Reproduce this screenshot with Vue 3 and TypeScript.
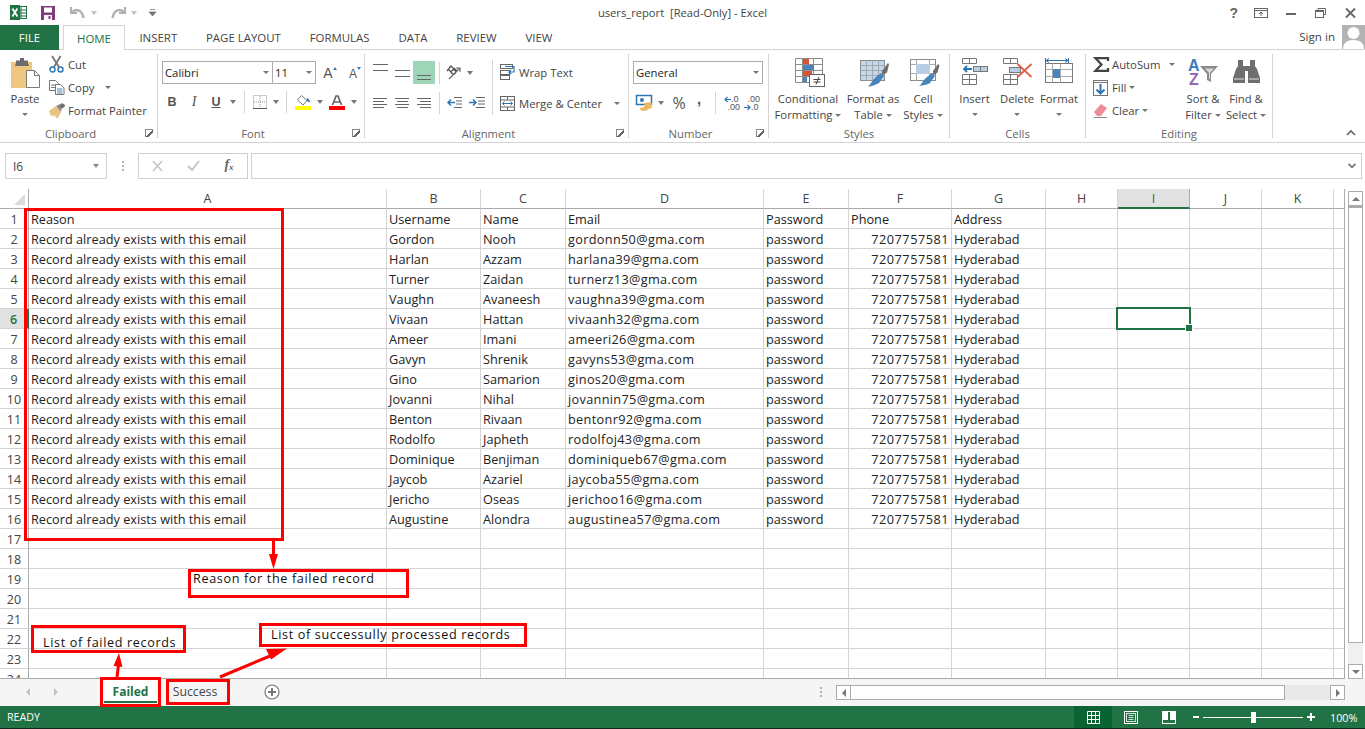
<script setup lang="ts">
const tabs: string[] = ['INSERT', 'PAGE LAYOUT', 'FORMULAS', 'DATA', 'REVIEW', 'VIEW']
const columns: string[] = ['A', 'B', 'C', 'D', 'E', 'F', 'G', 'H', 'I', 'J', 'K', '']
const people: string[][] = [
  ['Gordon', 'Nooh', 'gordonn50@gma.com'],
  ['Harlan', 'Azzam', 'harlana39@gma.com'],
  ['Turner', 'Zaidan', 'turnerz13@gma.com'],
  ['Vaughn', 'Avaneesh', 'vaughna39@gma.com'],
  ['Vivaan', 'Hattan', 'vivaanh32@gma.com'],
  ['Ameer', 'Imani', 'ameeri26@gma.com'],
  ['Gavyn', 'Shrenik', 'gavyns53@gma.com'],
  ['Gino', 'Samarion', 'ginos20@gma.com'],
  ['Jovanni', 'Nihal', 'jovannin75@gma.com'],
  ['Benton', 'Rivaan', 'bentonr92@gma.com'],
  ['Rodolfo', 'Japheth', 'rodolfoj43@gma.com'],
  ['Dominique', 'Benjiman', 'dominiqueb67@gma.com'],
  ['Jaycob', 'Azariel', 'jaycoba55@gma.com'],
  ['Jericho', 'Oseas', 'jerichoo16@gma.com'],
  ['Augustine', 'Alondra', 'augustinea57@gma.com'],
]
const blank = (): string[] => Array(12).fill('')
const rows: string[][] = [
  ['Reason', 'Username', 'Name', 'Email', 'Password', 'Phone', 'Address', '', '', '', '', ''],
  ...people.map((p) => ['Record already exists with this email', p[0], p[1], p[2], 'password', '7207757581', 'Hyderabad', '', '', '', '', '']),
  ...Array.from({ length: 8 }, blank),
]
</script>

<template>
  <div class="app">
    <header class="titlebar">
      <div class="qat">
        <svg class="i-xl" width="17" height="15" viewBox="0 0 17 15"><rect x="6" y="1.500" width="10.500" height="12" fill="#fff" stroke="#217346"/><path d="M6 5h10M6 8h10M6 11h10M11 2v12" stroke="#217346" fill="none"/><rect width="10" height="15" fill="#217346"/><path d="M2.400 3.500 7.400 11.500M7.400 3.500 2.400 11.500" stroke="#fff" stroke-width="1.800" fill="none"/></svg>
        <svg class="i-save" width="14" height="14" viewBox="0 0 14 14"><path d="M0 0h14v14H0z" fill="#80397b"/><rect x="3" y="1.500" width="8" height="5" fill="#fff"/><rect x="3" y="9" width="8" height="5" fill="#fff"/><rect x="7.500" y="10" width="2" height="3" fill="#80397b"/></svg>
        <svg class="i-undo" width="15" height="13" viewBox="0 0 15 13"><path d="M1 1v6h6" fill="none" stroke="#b1b1b1" stroke-width="2.200"/><path d="M2 6.500C5 2.500 12 3 13.500 12" fill="none" stroke="#b1b1b1" stroke-width="2.400"/></svg>
        <i class="caret qc1 pale"></i>
        <svg class="i-redo" width="15" height="13" viewBox="0 0 15 13"><path d="M14 1v6H8" fill="none" stroke="#b1b1b1" stroke-width="2.200"/><path d="M13 6.500C10 2.500 3 3 1.500 12" fill="none" stroke="#b1b1b1" stroke-width="2.400"/></svg>
        <i class="caret qc2 pale"></i>
        <svg class="i-cust" width="7" height="7" viewBox="0 0 7 7"><path d="M1 .5h5M0 3h7L3.500 7z" stroke="#777" stroke-width=".8" fill="#777"/></svg>
      </div>
      <div class="doc-title">users_report&nbsp; [Read-Only] - Excel</div>
      <div class="winctl">
        <span class="help">?</span>
        <svg width="14" height="10" viewBox="0 0 14 10"><rect x=".5" y=".5" width="13" height="9" fill="none" stroke="#666"/><path d="M.5 2.500h13M7 8V4M5 6l2-2 2 2" stroke="#666" fill="none"/></svg>
        <svg class="min" width="10" height="2" viewBox="0 0 10 2"><rect width="10" height="2" fill="#666"/></svg>
        <svg class="res" width="11" height="10" viewBox="0 0 11 10"><path d="M3 2.500V.5h7.500v6H8.500" fill="none" stroke="#666"/><rect x=".5" y="2.500" width="8" height="7" fill="none" stroke="#666"/><path d="M0 3.500h9" stroke="#666"/></svg>
        <svg class="cls" width="11" height="10" viewBox="0 0 11 10"><path d="M1 .5l9 9M10 .5l-9 9" stroke="#666" stroke-width="1.800" fill="none"/></svg>
      </div>
    </header>

    <nav class="tabbar">
      <div class="file">FILE</div>
      <div class="tab home">HOME</div>
      <div v-for="t in tabs" :key="t" class="tab">{{ t }}</div>
      <div class="signin">Sign in</div>
      <svg class="avatar" width="23" height="24" viewBox="0 0 23 24"><rect width="23" height="24" fill="#b3b3b3"/><circle cx="11.500" cy="8" r="6" fill="#fff"/><path d="M1 24c0-6 4-9 10.500-9S22 18 22 24z" fill="#fff"/></svg>
    </nav>

    <section class="ribbon">
      <div class="group g-clip">
        <div class="body">
          <div class="big w-paste">
            <svg class="big-ic" width="30" height="31" viewBox="0 0 30 31"><rect y="4" width="21" height="26" fill="#edc87e"/><path d="M5 5V2.500h4V0h4v2.500h4V5l1 3H4z" fill="#6d6d6d"/><path d="M15.500 12.500h8l5 5v12h-13z" fill="#fff" stroke="#7a7a7a"/><path d="M23.500 12.500v5h5" fill="none" stroke="#7a7a7a"/></svg>
            <span>Paste</span><i class="caret line-caret"></i>
          </div>
          <div class="stack">
            <div class="small"><span class="slot">
              <svg width="15" height="17" viewBox="0 0 15 17"><path d="M3 0l7 11M11.500 0L5 11" stroke="#777" stroke-width="1.800" fill="none"/><circle cx="3.500" cy="13.500" r="2.500" fill="none" stroke="#2f74b5" stroke-width="1.400"/><circle cx="11.500" cy="13.500" r="2.500" fill="none" stroke="#2f74b5" stroke-width="1.400"/></svg>
            </span>Cut</div>
            <div class="small"><span class="slot">
              <svg width="16" height="15" viewBox="0 0 16 15"><path d="M.5.500h6l3 3v7h-9z" fill="#fff" stroke="#777"/><path d="M2 5h5M2 7.500h5" stroke="#777"/><path d="M6.500 4.500h5l3.500 3.500v6.500H6.500z" fill="#fff" stroke="#777"/><path d="M8 9h5.500M8 11h5.500M8 13h5.500" stroke="#4a83bd"/></svg>
            </span>Copy<i class="caret copy-caret"></i></div>
            <div class="small"><span class="slot">
              <svg width="17" height="15" viewBox="0 0 17 15"><path d="M0 8l7-5 5 6-3 6H7l-1-3-1 2-1-2-2 1z" fill="#e8c27f"/><path d="M7 3l4-2 2 3-1 5z" fill="#8b8b8b"/><path d="M10 3l3-3 3.500 2.500-3 3z" fill="#6e6e6e"/></svg>
            </span>Format Painter</div>
          </div>
        </div>
        <div class="label-row"><span class="label">Clipboard</span><i class="launch"></i></div>
      </div>

      <div class="group g-font">
        <div class="body col">
          <div class="font-row1">
            <div class="field name">Calibri<i class="caret"></i></div>
            <div class="field size">11<i class="caret"></i></div>
            <span class="grow"><b class="a1">A</b><i class="tri up"></i></span>
            <span class="shrink"><b class="a2">A</b><i class="tri down"></i></span>
          </div>
          <div class="font-row2">
            <b class="fmt">B</b><i class="fmt it">I</i><u class="fmt ul">U</u><i class="caret"></i><i class="sep"></i>
            <svg width="14" height="14" viewBox="0 0 14 14"><rect x=".5" y=".5" width="13" height="13" fill="none" stroke="#999" stroke-dasharray="1 1"/><path d="M7 1v12M1 7h12" stroke="#999" stroke-dasharray="1 1"/><path d="M0 13.500h14" stroke="#555"/></svg>
            <i class="caret"></i><i class="sep"></i>
            <svg width="16" height="15" viewBox="0 0 16 15"><path d="M6.500.5l5.500 5-4 4.500-5.500-5z" fill="#fff" stroke="#777"/><path d="M12 3c2 1 3 2.500 3 4.500-1.500-.5-2.500-1-3.500-2z" fill="#3c7cbd"/><rect y="11" width="16" height="4" fill="#ffff00"/></svg>
            <i class="caret"></i>
            <svg width="16" height="15" viewBox="0 0 16 15"><path d="M3.500 10L7 1h2l3.500 9M5 7h6" fill="none" stroke="#666" stroke-width="1.700"/><rect y="11" width="16" height="4" fill="#f00"/></svg>
            <i class="caret"></i>
          </div>
        </div>
        <div class="label-row"><span class="label">Font</span><i class="launch"></i></div>
      </div>

      <div class="group g-align">
        <div class="body align-body">
          <div class="align-left">
            <div class="align-row">
              <span class="lines top"><i></i><i></i></span>
              <span class="lines mid"><i></i><i></i></span>
              <span class="lines bottom on"><i></i><i></i></span>
              <i class="sep"></i>
              <svg width="18" height="17" viewBox="0 0 18 17"><path d="M2 7l4-5 3 3M3.500 5.500l3 3" fill="none" stroke="#555" stroke-width="1.300"/><path d="M7 9.500a2 2 0 1 1 3-3 2 2 0 0 1-3 3zM9 4l3 3" fill="none" stroke="#555" stroke-width="1.200"/><path d="M4 15 14.500 4.500M11 4h4v4" fill="none" stroke="#666" stroke-width="1.100"/></svg>
              <i class="caret"></i>
            </div>
            <div class="align-row r2">
              <span class="lines bars al"><i></i><i></i><i></i><i></i></span>
              <span class="lines bars ac"><i></i><i></i><i></i><i></i></span>
              <span class="lines bars ar"><i></i><i></i><i></i><i></i></span>
              <i class="sep"></i>
              <svg width="15" height="12" viewBox="0 0 15 12"><path d="M7 .5h8M9 4h6M9 7h6M7 10.500h8" stroke="#666" fill="none"/><path d="M8 5.500H1M4 2.500l-3 3 3 3" stroke="#2e75b6" stroke-width="1.500" fill="none"/></svg>
              <svg width="16" height="12" viewBox="0 0 16 12"><path d="M7 .5h9M9 4h7M9 7h7M7 10.500h9" stroke="#666" fill="none"/><path d="M0 5.500h7M4 2.500l3 3-3 3" stroke="#2e75b6" stroke-width="1.500" fill="none"/></svg>
            </div>
          </div>
          <i class="tall-sep"></i>
          <div class="align-right">
            <div class="small wrap"><span class="slot">
              <svg width="15" height="16" viewBox="0 0 15 16"><rect x=".5" y=".5" width="12" height="4" fill="#fff" stroke="#666"/><rect x=".5" y="6.500" width="9" height="4" fill="#fff" stroke="#666"/><rect x=".5" y="11.500" width="9" height="4" fill="#fff" stroke="#666"/><path d="M5 2.500h9v5.500H9M11 6l-2 2 2 2" fill="none" stroke="#2e75b6" stroke-width="1.200"/></svg>
            </span>Wrap Text</div>
            <div class="small merge"><span class="slot">
              <svg width="15" height="15" viewBox="0 0 15 15"><rect x=".5" y=".5" width="14" height="14" fill="#fff" stroke="#666"/><path d="M1 4h13M1 11h13M7.500 1v3M7.500 11v3" stroke="#666"/><path d="M2.500 7.500h10M4.500 5.500l-2 2 2 2M10.500 5.500l2 2-2 2" fill="none" stroke="#2e75b6"/></svg>
            </span>Merge &amp; Center<i class="caret merge-caret"></i></div>
          </div>
        </div>
        <div class="label-row"><span class="label">Alignment</span><i class="launch"></i></div>
      </div>

      <div class="group g-num">
        <div class="body col">
          <div class="field general">General<i class="caret"></i></div>
          <div class="num-row">
            <svg width="17" height="16" viewBox="0 0 17 16"><rect x=".5" y=".5" width="15" height="9" fill="#fff" stroke="#2e75b6" stroke-width="1.500"/><circle cx="6" cy="5" r="2" fill="#2e75b6"/><ellipse cx="12" cy="9" rx="4" ry="1.800" fill="#edb85c"/><ellipse cx="12" cy="12" rx="4" ry="1.800" fill="#edb85c"/><ellipse cx="8" cy="14" rx="4" ry="1.800" fill="#edb85c"/></svg>
            <i class="caret"></i>
            <span class="pct">%</span>
            <span class="comma">,</span>
            <i class="sep"></i>
            <span class="dec"><svg width="7" height="7" viewBox="0 0 7 7"><path d="M7 3.500H1M3.500 1 1 3.500 3.500 6" fill="none" stroke="#2e75b6" stroke-width="1.200"/></svg><em class="d1">.0</em><em class="d2">.00</em></span>
            <span class="dec"><em class="d3">.00</em><svg width="7" height="7" viewBox="0 0 7 7"><path d="M0 3.500h6M3.500 1 6 3.500 3.500 6" fill="none" stroke="#2e75b6" stroke-width="1.200"/></svg><em class="d4">.0</em></span>
          </div>
        </div>
        <div class="label-row"><span class="label">Number</span><i class="launch"></i></div>
      </div>

      <div class="group g-styles">
        <div class="body">
          <div class="big w-cond">
            <svg class="big-ic" width="30" height="31" viewBox="0 0 30 31"><path d="M.5.500h27v24H.5zM.5 6.500h27M.5 12.500h27M.5 18.500h27M7.500.500v24M18.500.500v24" fill="#fff" stroke="#8c8c8c"/><rect x="8" y="1" width="6" height="5" fill="#d65532"/><rect x="8" y="7" width="11" height="5" fill="#4a83bd"/><rect x="8" y="13" width="9" height="5" fill="#d65532"/><rect x="8" y="19" width="4" height="5" fill="#4a83bd"/><rect x="14.500" y="16.500" width="15" height="12" fill="#fff" stroke="#666"/><path d="M18.500 21.500h7M18.500 24h7M24 19l-3 7.500" stroke="#444" fill="none"/></svg>
            <span>Conditional</span><span>Formatting<i class="caret inline"></i></span>
          </div>
          <div class="big w-fmt">
            <svg class="big-ic" width="30" height="31" viewBox="0 0 30 31"><g transform="translate(0 2)"><rect x=".5" y=".5" width="24" height="20" fill="#c5d7ea" stroke="#8c8c8c"/><path d="M.5 5.500h24M.5 10.500h24M.5 15.500h24M6.500.500v20M12.500.500v20M18.500.500v20" stroke="#a0a8b0" fill="none"/><path d="M22 11l6-8 1 1.500-2 8-5 3z" fill="#6e6e6e"/><path d="M21 13l3 3-5 7c-3 2-8 3-11 4 3-3 4-7 8-10z" fill="#4a83bd"/></g></svg>
            <span>Format as</span><span>Table<i class="caret inline"></i></span>
          </div>
          <div class="big w-cs">
            <svg class="big-ic" width="30" height="31" viewBox="0 0 30 31"><g transform="translate(0 1)"><rect x=".5" y=".5" width="25" height="21" fill="#fff" stroke="#8c8c8c"/><path d="M.5 5.500h25M.5 14.500h25M6.500.500v21M19.500.500v21" stroke="#a9a9a9" fill="none"/><rect x="6" y="5" width="14" height="10" fill="#b9cde5"/><path d="M23 12l5-7 1.500 1.500-2 7-4 3z" fill="#6e6e6e"/><path d="M22 14l3 3-5 7c-3 2-7 2-11 3 3-2 4-6 8-9z" fill="#4a83bd"/></g></svg>
            <span>Cell</span><span>Styles<i class="caret inline"></i></span>
          </div>
        </div>
        <div class="label-row single"><span class="label">Styles</span></div>
      </div>

      <div class="group g-cells">
        <div class="body">
          <div class="big w-ins">
            <svg class="big-ic" width="27" height="31" viewBox="0 0 27 31"><path d="M1.500.500h14v5h-14zM8.500.500v5M1.500 16.500h14v10h-14zM1.500 21.500h14M8.500 16.500v10" fill="#fff" stroke="#777"/><rect x="12.500" y="8.500" width="14" height="5" fill="#b9cde5" stroke="#777"/><path d="M19.500 8.500v5" stroke="#777"/><path d="M11 11H3M6 8 3 11l3 3" stroke="#2e75b6" stroke-width="1.800" fill="none"/></svg>
            <span>Insert</span><i class="caret line-caret"></i>
          </div>
          <div class="big w-del">
            <svg class="big-ic" width="31" height="31" viewBox="0 0 31 31"><path d="M1.500.500h14v5h-14zM8.500.500v5M1.500 16.500h14v10h-14zM1.500 21.500h14M8.500 16.500v10" fill="#fff" stroke="#777"/><rect x="7.500" y="9.500" width="11" height="5" fill="#b9cde5" stroke="#777"/><path d="M15.500 6l14 13M29.500 6l-14 13" stroke="#e0654a" stroke-width="2" fill="none"/></svg>
            <span>Delete</span><i class="caret line-caret"></i>
          </div>
          <div class="big w-form">
            <svg class="big-ic" width="30" height="31" viewBox="0 0 30 31"><path d="M.5 0v5M23.500 0v5" stroke="#2e75b6"/><path d="M1 2.500h22M4 .5l-3 2 3 2M20 .5l3 2-3 2" stroke="#2e75b6" fill="none"/><rect x=".5" y="5.500" width="27" height="19" fill="#fff" stroke="#777"/><path d="M.5 11.500h27M.5 18.500h27M7.500 5.500v19M15.500 5.500v19" stroke="#aaa" fill="none"/><rect x="8" y="11" width="7" height="9" fill="#4a83bd"/></svg>
            <span>Format</span><i class="caret line-caret"></i>
          </div>
        </div>
        <div class="label-row single"><span class="label">Cells</span></div>
      </div>

      <div class="group g-edit">
        <div class="body">
          <div class="stack edit-stack">
            <div class="small"><span class="slot">
              <svg width="16" height="15" viewBox="0 0 16 15"><path d="M15 4V1.200H2.500l6 6.300-6 6.300H15V11" fill="none" stroke="#444" stroke-width="2.300"/></svg>
            </span>AutoSum<i class="caret sum-caret"></i></div>
            <div class="small"><span class="slot">
              <svg width="15" height="16" viewBox="0 0 15 16"><rect x=".5" y=".5" width="14" height="15" fill="#fff" stroke="#777"/><path d="M.5 2.500h14" stroke="#777"/><path d="M7.500 4v9M3.500 9.500l4 4 4-4" fill="none" stroke="#2e75b6" stroke-width="2"/></svg>
            </span>Fill<i class="caret inline"></i></div>
            <div class="small"><span class="slot">
              <svg width="15" height="15" viewBox="0 0 15 15"><path d="M8 1l6 4-6 8H4L1 9z" fill="#ee8c9c"/><path d="M1 14.500h13" stroke="#888"/></svg>
            </span>Clear<i class="caret inline"></i></div>
          </div>
          <div class="big w-sort">
            <svg class="big-ic" width="30" height="31" viewBox="0 0 30 31">
              <text x="0" y="13" class="az a">A</text>
              <text x="1" y="27" class="az z">Z</text>
              <g transform="translate(12 8)"><path d="M0 0h18l-7 8v8l-4-2V8z" fill="#8a8a8a"/><path d="M5 2.500h9L10 7v6l-1-.5V7z" fill="#d8d8d8"/></g>
            </svg>
            <span>Sort &amp;</span><span>Filter<i class="caret inline"></i></span>
          </div>
          <div class="big w-find">
            <svg class="big-ic" width="27" height="31" viewBox="0 0 27 31"><g transform="translate(0 2)"><path d="M5 0h5v6h7V0h5v6l2 3 3 9v5H15V11h-3v12H0v-5l3-9 2-3z" fill="#6e6e6e"/><path d="M1 19h10M16 19h10" stroke="#fff" stroke-width=".8"/></g></svg>
            <span>Find &amp;</span><span>Select<i class="caret inline"></i></span>
          </div>
        </div>
        <div class="label-row single"><span class="label">Editing</span></div>
      </div>

      <svg class="collapse" width="10" height="6" viewBox="0 0 10 6"><path d="M1 5l4-4 4 4" fill="none" stroke="#666" stroke-width="1.700"/></svg>
    </section>

    <section class="formula">
      <div class="namebox">I6<i class="caret big-caret"></i></div>
      <span class="dots"></span>
      <div class="fx-btns">
        <svg width="11" height="10" viewBox="0 0 11 10"><path d="M1 0l9 10M10 0 1 10" stroke="#c6c6c6" stroke-width="1.700"/></svg>
        <svg width="13" height="10" viewBox="0 0 13 10"><path d="M1 5l4 4 7-9" fill="none" stroke="#c6c6c6" stroke-width="2"/></svg>
        <span class="fx">f<sub>x</sub></span>
      </div>
      <div class="input">
        <svg width="8" height="6" viewBox="0 0 8 6"><path d="M.5.800 4 4.300 7.500.800" fill="none" stroke="#777" stroke-width="1.800"/></svg>
      </div>
    </section>

    <section class="sheet">
      <div class="grid">
        <div class="corner"><i></i></div>
        <div v-for="(c, i) in columns" :key="'h' + i" class="colhead" :class="{ active: c === 'I' }">{{ c }}</div>
        <template v-for="(row, r) in rows" :key="r">
          <div class="rowhead" :class="{ active: r === 5 }">{{ r + 1 }}</div>
          <div v-for="(v, c) in row" :key="c" class="cell" :class="{ num: c === 5 && r > 0 && v, mail: c === 3 && r > 0 }">
            {{ v }}
            <div v-if="r === 5 && c === 8" class="selection"><i></i></div>
          </div>
        </template>
      </div>
      <div class="vscroll">
        <div class="sb-btn"><i class="tri-up"></i></div>
        <div class="sb-thumb"></div>
        <div class="sb-track"></div>
        <div class="sb-btn"><i class="tri-down"></i></div>
      </div>
    </section>

    <section class="sheetbar">
      <div class="nav"><i class="arrow left"></i><i class="arrow right"></i></div>
      <div class="sheet-tab on">Failed</div>
      <div class="sheet-tab">Success</div>
      <svg class="plus" width="16" height="16" viewBox="0 0 16 16"><circle cx="8" cy="8" r="7" fill="#fff" stroke="#777" stroke-width="1.200"/><path d="M8 4v8M4 8h8" stroke="#777" stroke-width="2"/></svg>
      <span class="split"></span>
      <div class="hscroll">
        <div class="sb-btn h"><i class="tri-left"></i></div>
        <div class="sb-thumb h"></div>
        <div class="sb-track h"></div>
        <div class="sb-btn h"><i class="tri-right"></i></div>
      </div>
    </section>

    <footer class="status">
      <span class="ready">READY</span>
      <div class="views">
        <span class="view on"><svg width="13" height="13" viewBox="0 0 13 13"><path d="M.5.500h12v12H.5zM.5 4.500h12M.5 8.500h12M4.500.500v12M8.500.500v12" fill="none" stroke="#fff"/></svg></span>
        <span class="view"><svg width="14" height="13" viewBox="0 0 14 13"><rect x=".5" y=".5" width="13" height="12" fill="none" stroke="#fff"/><rect x="2.500" y="2.500" width="9" height="8" fill="none" stroke="#fff" stroke-width=".8"/><path d="M4.500 4.500h5M4.500 6.500h5M4.500 8.500h5" stroke="#fff" stroke-width=".8"/></svg></span>
        <span class="view"><svg width="14" height="13" viewBox="0 0 14 13"><rect x=".5" y=".5" width="13" height="12" fill="none" stroke="#fff"/><path d="M1 1h5v8H1zM8 1h5v8H8z" fill="#fff"/></svg></span>
      </div>
      <div class="zoom">
        <i class="z-minus"></i>
        <span class="z-track"><i class="z-thumb"></i></span>
        <span class="z-plus"></span>
        <span class="z-val">100%</span>
      </div>
    </footer>

    <div class="notes">
      <svg class="note-art" width="1365" height="729" viewBox="0 0 1365 729">
        <g fill="none" stroke="#f00" stroke-width="3">
          <rect x="25.500" y="209.500" width="257" height="330"/>
          <rect x="189.500" y="570.500" width="218" height="26"/>
          <rect x="32.500" y="626.500" width="152" height="25"/>
          <rect x="260.500" y="624.500" width="265" height="21"/>
          <rect x="101.500" y="678.500" width="58" height="27"/>
          <rect x="167.500" y="680.500" width="61" height="23"/>
          <path d="M273.500 541v16M117 677l1.500-12M220 677l50-21"/>
        </g>
        <path d="M269 554h9l-4.500 15zM113.500 666l9 1-3.500-14zM266 649l21-.5-16 11z" fill="#f00"/>
      </svg>
      <div class="note n1">Reason for the failed record</div>
      <div class="note n2">List of failed records</div>
      <div class="note n3">List of successully processed records</div>
    </div>
  </div>
</template>

<style>
html, body { margin: 0; background: #fff; overflow: hidden; }
</style>

<style scoped>
.app { position: relative; width: 1365px; height: 729px; overflow: hidden; display: flex; flex-direction: column; background: #fff; font-family: "Open Sans", "Noto Sans", sans-serif; font-size: 11.300px; color: #444; }
i, em { font-style: normal; }
svg { overflow: visible; }
.caret { display: inline-block; width: 0; height: 0; border-left: 3.500px solid transparent; border-right: 3.500px solid transparent; border-top: 4px solid #777; flex: none; }
.caret.pale { border-top-color: #c0c0c0; }
.caret.inline { margin-left: 3px; vertical-align: middle; border-left-width: 3px; border-right-width: 3px; border-top-width: 3px; }

/* title */
.titlebar { height: 25px; display: grid; grid-template-columns: 1fr auto 1fr; align-items: center; flex: none; }
.qat { display: flex; align-items: center; padding-left: 10px; }
.i-save { margin-left: 14px; }
.i-undo { margin-left: 15px; }
.qc1 { margin-left: 6px; }
.i-redo { margin-left: 14px; }
.qc2 { margin-left: 5px; }
.i-cust { margin-left: 12px; }
.doc-title { font-size: 11.200px; color: #444; }
.winctl { display: flex; align-items: center; justify-content: flex-end; padding-right: 9px; }
.help { font-family: "Liberation Sans", sans-serif; font-weight: 700; font-size: 14px; color: #666; margin-right: 16px; }
.min { margin-left: 18px; margin-top: 2px; }
.res { margin-left: 19px; }
.cls { margin-left: 19px; }

/* tabs */
.tabbar { height: 25px; flex: none; display: flex; align-items: stretch; border-bottom: 1px solid #d4d4d4; box-sizing: border-box; position: relative; font-size: 11.450px; }
.file { width: 59px; background: #217346; color: #fff; text-align: center; line-height: 25px; margin-bottom: -1px; }
.tab { padding: 0 14.400px; line-height: 25px; color: #444; }
.tab.home { color: #217346; margin-left: 4px; width: 62px; box-sizing: border-box; padding: 0; text-align: center; background: #fff; border: 1px solid #d4d4d4; border-bottom: 0; margin-bottom: -1px; }
.signin { margin-left: auto; line-height: 24px; margin-right: 7px; font-size: 11.600px; }
.avatar { flex: none; }

/* ribbon */
.ribbon { height: 93px; flex: none; box-sizing: border-box; display: flex; padding-top: 4px; border-bottom: 1px solid #d4d4d4; position: relative; }
.group { height: 84px; border-right: 1px solid #d4d4d4; box-sizing: content-box; display: flex; flex-direction: column; flex: none; }
.g-clip { width: 157px; }
.g-font { width: 206px; }
.g-align { width: 263px; }
.g-num { width: 139px; }
.g-styles { width: 180px; }
.g-cells { width: 135px; }
.g-edit { width: 186px; }
.body { flex: 1; display: flex; min-height: 0; }
.col { flex-direction: column; }
.label-row { height: 16px; margin-bottom: -3px; display: flex; align-items: center; }
.label { flex: 1; text-align: center; color: #666; }
.launch { width: 8px; height: 8px; margin-right: 4px; margin-left: 4px; box-sizing: border-box; border-left: 1px solid #888; border-top: 1px solid #888; position: relative; flex: none; background: linear-gradient(135deg, transparent 45%, #666 45%, #666 70%, transparent 70%); }
.big { display: flex; flex-direction: column; align-items: center; flex: none; line-height: 16px; white-space: nowrap; }
.big-ic { margin-top: 4px; margin-bottom: 2px; height: 31px; flex: none; }
.line-caret { margin-top: 6px; border-left-width: 3px; border-right-width: 3px; border-top-width: 3px; }
.w-paste { width: 50px; }
.w-paste .big-ic { margin-left: 1px; }
.stack { display: flex; flex-direction: column; margin-left: -1px; margin-top: -1px; }
.small { height: 23px; display: flex; align-items: center; white-space: nowrap; }
.slot { width: 19px; display: flex; justify-content: flex-start; flex: none; }
.copy-caret { margin-left: 11px; border-left-width: 3px; border-right-width: 3px; border-top-width: 3px; }

/* font */
.field { box-sizing: border-box; height: 23px; border: 1px solid #ababab; display: flex; align-items: center; justify-content: space-between; padding: 0 3px 0 2px; color: #222; background: #fff; }
.field .caret { border-left-width: 3px; border-right-width: 3px; border-top-width: 3px; }
.font-row1 { display: grid; grid-template-columns: 111px 43px 28px 22px; margin: 7px 0 0 4px; align-items: center; }
.field.size { margin-left: -1px; }
.grow, .shrink { display: inline-flex; align-items: flex-start; justify-content: center; position: relative; color: #555; }
.a1 { font-family: "Liberation Sans", sans-serif; font-weight: 400; font-size: 14px; }
.a2 { font-family: "Liberation Sans", sans-serif; font-weight: 400; font-size: 12px; margin-top: 2px; }
.tri { width: 0; height: 0; border-left: 2.500px solid transparent; border-right: 2.500px solid transparent; margin-top: 2px; }
.tri.up { border-bottom: 3px solid #3c7cbd; }
.tri.down { border-top: 3px solid #3c7cbd; }
.font-row2 { display: grid; grid-template-columns: 22px 22px 22px 12px 10px 22px 10px 11px 22px 11px 24px 9px; height: 22px; margin: 7px 0 0 3px; align-items: center; justify-items: center; }
.fmt { font-family: "Liberation Sans", sans-serif; font-size: 12.500px; color: #555; }
.it { font-family: "Liberation Serif", serif; font-style: italic; font-size: 14px; }
.ul { font-weight: 700; text-decoration: underline; }
.sep { width: 1px; height: 22px; background: #d4d4d4; display: block; }

/* alignment */
.align-left { width: 124px; padding: 7px 0 0 4px; box-sizing: content-box; }
.align-body { padding-left: 0; }
.align-row { display: grid; grid-template-columns: 22px 22px 22px 8px 22px 9px; height: 23px; align-items: center; justify-items: center; }
.align-row.r2 { grid-template-columns: 22px 22px 22px 8px 22px 23px; margin-top: 7px; }
.lines { width: 22px; height: 23px; box-sizing: border-box; padding: 0 3.500px; display: flex; flex-direction: column; gap: 3px; }
.lines i { display: block; height: 1px; background: #666; }
.lines.top { justify-content: flex-start; padding-top: 3px; gap: 5px; }
.lines.mid { justify-content: center; padding-top: 2px; gap: 5px; }
.lines.bottom { justify-content: flex-end; padding-bottom: 5px; }
.lines.on { background: #9fd5b7; padding: 0 4px 4px; }
.lines.bars { justify-content: center; gap: 2px; padding: 0 4px; }
.lines.bars.al i:nth-child(even), .lines.bars.ac i:nth-child(even), .lines.bars.ar i:nth-child(even) { width: 11px; }
.lines.bars.ac { align-items: center; }
.lines.bars.ac i { width: 14px; }
.lines.bars.ar { align-items: flex-end; }
.lines.bars.ar i { width: 14px; }
.tall-sep { width: 1px; height: 55px; margin: 6px 7px 0 -1px; background: #d4d4d4; flex: none; }
.align-right { display: flex; flex-direction: column; }
.wrap { height: 24px; margin-top: 6px; }
.merge { height: 24px; margin-top: 7px; }
.merge-caret { margin-left: 12px; border-left-width: 3px; border-right-width: 3px; border-top-width: 3px; }

/* number */
.general { width: 130px; margin: 7px 0 0 4px; }
.num-row { display: grid; grid-template-columns: 22px 11px 26px 14px 18px 16px 20px; margin: 8px 0 0 4px; height: 22px; align-items: center; justify-items: center; }
.pct { font-size: 16px; color: #555; }
.comma { font-family: "Liberation Sans", sans-serif; font-weight: 700; font-size: 15px; color: #555; line-height: 12px; position: relative; top: -4px; }
.dec { display: grid; grid-template-columns: 7px 9px; grid-template-rows: 8px 8px; width: 16px; justify-self: end; font-family: "Liberation Sans", sans-serif; font-size: 9px; line-height: 8px; color: #555; align-items: center; }
.d2 { grid-column: 1 / 3; text-align: right; }
.d3 { grid-column: 1 / 3; text-align: right; }

/* big widths */
.w-cond { width: 78px; }
.w-cond .big-ic { margin-left: 4px; }
.w-fmt { width: 52px; }
.w-fmt .big-ic { margin-left: 3px; }
.w-cs { width: 48px; }
.w-cs .big-ic { margin-left: 4px; }
.w-ins { width: 49px; }
.w-del { width: 36px; }
.w-form { width: 48px; }
.w-form .big-ic { margin-left: 1px; }
.w-sort { width: 38px; }
.w-find { width: 48px; }
.edit-stack { width: 98px; margin-left: 7px; flex: none; margin-right: -7px; }
.sum-caret { margin-left: 9px; border-left-width: 3px; border-right-width: 3px; border-top-width: 3px; }
.edit-stack .slot { width: 19px; }
.az { font-family: "Liberation Sans", sans-serif; font-weight: 700; font-size: 16px; }
.az.a { fill: #3c7cbd; }
.az.z { fill: #9467b5; }
.collapse { position: absolute; left: 1346px; top: 80px; }

/* formula */
.formula { height: 26px; margin-top: 10px; flex: none; display: flex; align-items: stretch; padding-left: 5px; }
.namebox { width: 102px; box-sizing: border-box; border: 1px solid #d0d0d0; display: flex; align-items: center; justify-content: space-between; padding: 0 7px; color: #444; font-size: 12px; }
.big-caret { border-left-width: 3.500px; border-right-width: 3.500px; border-top-width: 4px; border-top-color: #888; }
.dots { width: 2px; height: 10px; margin: 8px 14px 0 15px; background: repeating-linear-gradient(#b5b5b5 0 2px, transparent 2px 4px); flex: none; }
.fx-btns { width: 110px; box-sizing: border-box; border: 1px solid #d0d0d0; display: grid; grid-template-columns: 36px 36px 36px; align-items: center; justify-items: center; }
.fx { font-family: "Liberation Serif", serif; font-style: italic; font-weight: 700; font-size: 14px; color: #666; line-height: 14px; }
.fx sub { font-size: 9px; vertical-align: -1px; }
.input { width: 1111px; margin-left: 3px; box-sizing: border-box; border: 1px solid #d0d0d0; display: flex; align-items: center; justify-content: flex-end; padding-right: 5px; }

/* sheet */
.sheet { height: 490px; margin-top: 10px; flex: none; display: flex; }
.grid { width: 1345px; height: 490px; overflow: hidden; display: grid; grid-template-columns: 29px 358px 94px 85px 198px 85px 103px 94px 72px 72px 72px 72px 11px; grid-auto-rows: 20px; box-sizing: border-box; border-right: 1px solid #ababab; border-bottom: 1px solid #ababab; font-size: 12.500px; color: #222; flex: none; }
.corner { border-right: 1px solid #ababab; border-bottom: 1px solid #ababab; position: relative; box-sizing: border-box; display: flex; align-items: flex-end; justify-content: flex-end; }
.corner i { width: 0; height: 0; border-left: 11px solid transparent; border-bottom: 11px solid #dcdcdc; margin: 0 3px 3px 0; }
.colhead { box-sizing: border-box; border-bottom: 1px solid #ababab; border-right: 1px solid #d4d4d4; text-align: center; line-height: 20px; color: #444; }
.colhead:nth-child(13) { border-right: 0; }
.colhead.active { background: #e1e1e1; color: #217346; border-bottom: 2px solid #217346; border-right-color: #ababab; }
.rowhead { box-sizing: border-box; border-right: 1px solid #ababab; border-bottom: 1px solid #d4d4d4; text-align: center; line-height: 21px; color: #444; }
.rowhead.active { background: #e1e1e1; color: #217346; font-weight: 600; border-right: 2px solid #217346; }
.cell { box-sizing: border-box; border-right: 1px solid #d4d4d4; border-bottom: 1px solid #d4d4d4; padding: 0 2px; font-size: 12.730px; line-height: 21px; white-space: nowrap; position: relative; }
.cell:nth-child(13n) { border-right: 0; }
.cell.num { text-align: right; padding-right: 2px; letter-spacing: .5px; }
.cell.mail { letter-spacing: .32px; }
.selection { position: absolute; left: -2px; top: -2px; width: 75px; height: 23px; box-sizing: border-box; border: 2px solid #217346; z-index: 2; }
.selection i { position: absolute; right: -3px; bottom: -3px; width: 6px; height: 6px; box-sizing: border-box; background: #217346; outline: 1px solid #fff; }

.vscroll { width: 15px; margin-left: 3px; padding-top: 2px; display: flex; flex-direction: column; height: 490px; box-sizing: border-box; }
.sb-btn { width: 15px; height: 15px; box-sizing: border-box; border: 1px solid #ababab; background: #fff; display: flex; align-items: center; justify-content: center; flex: none; }
.sb-thumb { height: 437px; box-sizing: border-box; border: 1px solid #ababab; border-top-width: 2px; background: #fff; flex: none; }
.sb-track { flex: 1; background: #f0f0f0; }
.tri-up { width: 0; height: 0; border-left: 4px solid transparent; border-right: 4px solid transparent; border-bottom: 4px solid #777; }
.tri-down { width: 0; height: 0; border-left: 4px solid transparent; border-right: 4px solid transparent; border-top: 4px solid #777; }
.tri-left { width: 0; height: 0; border-top: 4px solid transparent; border-bottom: 4px solid transparent; border-right: 4px solid #777; }
.tri-right { width: 0; height: 0; border-top: 4px solid transparent; border-bottom: 4px solid transparent; border-left: 4px solid #777; }

/* sheet tabs */
.sheetbar { height: 27px; flex: none; background: #f5f5f5; display: flex; align-items: flex-start; position: relative; }
.nav { width: 104px; display: flex; height: 26px; align-items: center; padding-left: 26px; box-sizing: border-box; gap: 24px; }
.arrow { width: 0; height: 0; border-top: 4px solid transparent; border-bottom: 4px solid transparent; }
.arrow.left { border-right: 4px solid #c2c2c2; }
.arrow.right { border-left: 4px solid #c2c2c2; }
.sheet-tab { height: 24px; line-height: 25px; text-align: center; font-size: 12.300px; color: #444; box-sizing: border-box; width: 55px; margin-left: 10px; padding-left: 1px; }
.sheet-tab.on { width: 53px; margin-left: 0; padding-left: 0; background: #fff; color: #217346; font-size: 12px; font-weight: 700; border-bottom: 2px solid #217346; }
.plus { margin: 5px 0 0 42px; flex: none; }
.split { width: 2px; height: 10px; margin: 8px 0 0 540px; background: repeating-linear-gradient(#b0b0b0 0 2px, transparent 2px 4px); flex: none; }
.hscroll { display: flex; margin: 6px 0 0 14px; height: 15px; flex: none; width: 509px; }
.sb-btn.h { flex: none; }
.sb-thumb.h { width: 435px; height: 15px; border-width: 1px; flex: none; margin-left: -1px; }
.sb-track.h { width: 45px; background: #e9e9e9; flex: none; }

/* status */
.status { height: 23px; flex: none; box-sizing: border-box; background: #217346; border-bottom: 1px solid #15241c; color: #fff; display: flex; align-items: stretch; position: relative; }
.ready { padding-left: 7px; line-height: 22px; font-size: 10.700px; }
.views { margin-left: auto; display: flex; }
.view { width: 38px; display: flex; align-items: center; justify-content: center; }
.view.on { background: #0a6332; }
.zoom { display: flex; align-items: center; width: 177px; box-sizing: border-box; padding-left: 5px; flex: none; }
.z-minus { width: 6px; height: 2px; background: #fff; flex: none; }
.z-track { width: 100px; height: 1px; background: #fff; margin-left: 4px; position: relative; flex: none; }
.z-thumb { position: absolute; left: 48px; top: -5px; width: 5px; height: 11px; background: #fff; }
.z-plus { width: 8px; height: 8px; margin-left: 4px; flex: none; background: linear-gradient(#fff, #fff) center/8px 2px no-repeat, linear-gradient(#fff, #fff) center/2px 8px no-repeat; }
.z-val { margin-left: 15px; font-size: 10.800px; }

/* annotations */
.notes { position: absolute; inset: 0; pointer-events: none; }
.note-art { position: absolute; left: 0; top: 0; }
.note { position: absolute; color: #111; font-size: 12.600px; line-height: 16px; white-space: nowrap; letter-spacing: .65px; }
.n1 { left: 193px; top: 571px; }
.n2 { left: 43px; top: 635px; }
.n3 { left: 271px; top: 627px; }
</style>
